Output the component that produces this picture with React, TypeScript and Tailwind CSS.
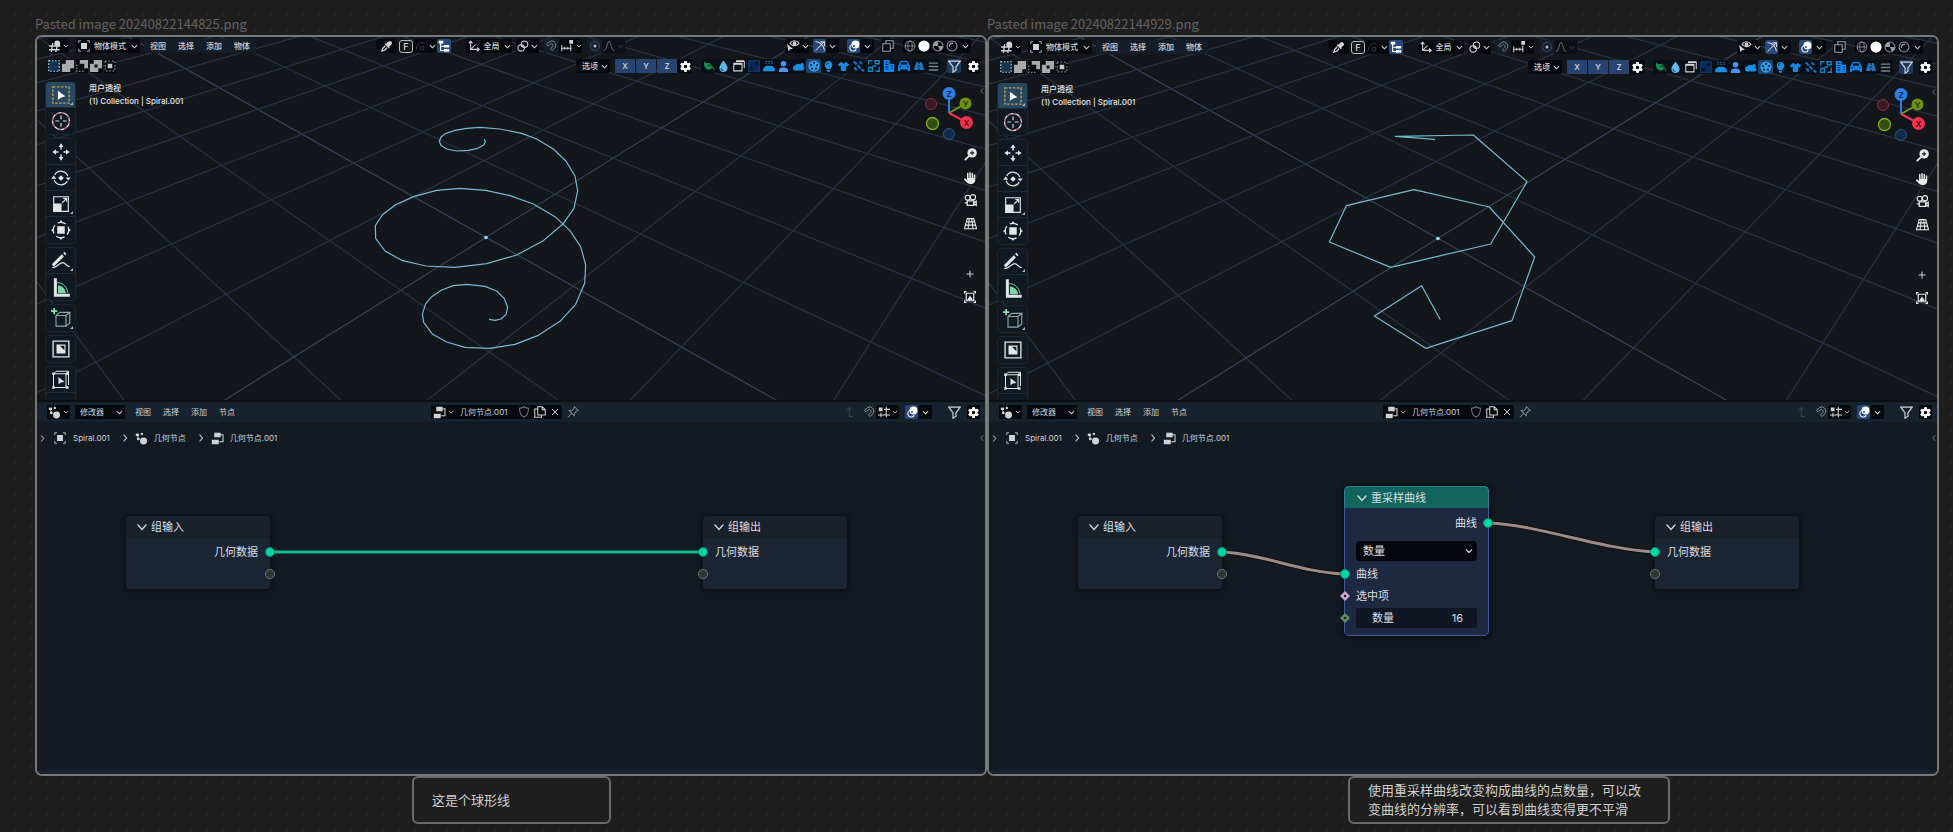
import type { ReactNode } from 'react';
import {
  FaBars, FaBuilding, FaCar, FaDroplet, FaEyeDropper, FaGear, FaHand, FaLeaf, FaLightbulb, FaRoad, FaShirt, FaUser,
} from 'react-icons/fa6';

type IconProps = { children: ReactNode; className?: string };

/* 16-unit stroke icon, sized by its class */
function Icon({ children, className = 'size-3' }: IconProps) {
  return (
    <svg viewBox="0 0 16 16" className={`shrink-0 ${className}`} fill="none" stroke="currentColor" strokeWidth="1.4" aria-hidden="true">
      {children}
    </svg>
  );
}

const Chevron = ({ className = 'size-[7px]' }: { className?: string }) => (
  <Icon className={className}><path d="M2 5l6 6 6-6" strokeWidth="2.4" /></Icon>
);
const ThinChevron = () => (
  <Icon className="size-2.5"><path d="M1 4l7 8 7-8" strokeWidth="1.900" /></Icon>
);
const ChevronRight = ({ className = 'size-2' }: { className?: string }) => (
  <Icon className={className}><path d="M5 1l6 7-6 7" strokeWidth="2.2" /></Icon>
);
const ViewportIcon = () => (
  <Icon><path d="M0 8h15M0 13h14M5 4L3 16M11 8l-2 8" strokeWidth="1.800" /><circle cx="11" cy="4.500" r="3.900" fill="currentColor" stroke="none" /></Icon>
);
const ObjectIcon = ({ className = 'size-3' }: { className?: string }) => (
  <Icon className={className}>
    <path d="M1 4V1h3M12 1h3v3M15 12v3h-3M4 15H1v-3" strokeWidth="1.100" />
    <path d="M4 4h8v8H4z" fill="currentColor" stroke="none" />
  </Icon>
);
const TreeIcon = () => (
  <Icon>
    <path d="M1 1h6v3.500H1zM8 6.500h7V10H8zM8 12h7v3.500H8z" fill="currentColor" stroke="none" />
    <path d="M3.500 4v10H8M3.500 8.300H8" />
  </Icon>
);
const AxesIcon = () => (
  <Icon><path d="M3.500 2v10.500H14M3.500 12.500L10 6M1 4.500L3.500 1.500 6 4.500M12 10l3 2.500-3 2.500" /></Icon>
);
const LinkIcon = () => (
  <Icon><circle cx="10" cy="5.500" r="4.300" /><circle cx="5.500" cy="10.500" r="4.300" /><circle cx="8" cy="8" r="1.400" fill="currentColor" stroke="none" /></Icon>
);
const MagnetIcon = () => (
  <Icon><path d="M2 5.500l3.500-3a5.500 5.500 0 0 1 7.500 8L9.500 14l-2.200-2.200 3.200-3.300a2.300 2.300 0 0 0-3.200-3.200L4.200 8z" strokeWidth="1.300" /></Icon>
);
const RulerSnapIcon = () => (
  <Icon className="h-3 w-3.5"><path d="M0 11h14M1 7v8M5 9v4M9 9v4M13 6v9" /><path d="M11 0h5v5h-5z" fill="currentColor" stroke="none" /></Icon>
);
const FalloffIcon = () => <Icon><path d="M1 14c5 0 4-12 7-12s2 12 7 12" /></Icon>;
const EyePointerIcon = () => (
  <Icon className="h-3 w-3.5"><path d="M4 4.500C7 0 13 0 16 4.500 13 8.500 7.500 8.500 4 4.500z" /><circle cx="10" cy="4.500" r="1.800" fill="currentColor" /><path d="M0 5l2 10 2.500-3H8z" fill="currentColor" stroke="none" /></Icon>
);
const GizmoIcon = () => (
  <Icon><path d="M2 2c7 1 11 6 12 12M2 14L13 3M8.500 2.500H14V8" /></Icon>
);
const OverlayIcon = () => (
  <Icon><circle cx="10" cy="6" r="5.300" fill="currentColor" stroke="none" /><path d="M5 6.200a4.500 4.500 0 1 0 6 6" /><circle cx="8" cy="8" r="1.300" fill="#26487c" stroke="none" /></Icon>
);
const XrayIcon = () => <Icon><path d="M1 5h10v10H1zM5 5V1h10v10h-4M6 5h5v6" /></Icon>;
const GlobeIcon = () => (
  <Icon><circle cx="8" cy="8" r="6.600" strokeWidth="1.200" /><ellipse cx="8" cy="8" rx="3" ry="6.600" strokeWidth="1.100" /><path d="M1.500 8h13" strokeWidth="1.100" /></Icon>
);
const SolidIcon = () => <Icon><circle cx="8" cy="8" r="7.500" fill="currentColor" stroke="none" /></Icon>;
const MaterialIcon = () => (
  <Icon><circle cx="8" cy="8" r="6.600" /><path d="M8 1.500v6.500h6.500a6.500 6.500 0 0 1-4 6L8 8H1.500A6.500 6.500 0 0 1 8 1.500z" fill="currentColor" stroke="none" /></Icon>
);
const RenderedIcon = () => (
  <Icon><circle cx="8" cy="8" r="6.600" /><path d="M4.500 9a4 4 0 0 1 5-4.500" strokeWidth="1.800" /></Icon>
);
const FunnelIcon = () => <Icon className="size-[13px]"><path d="M1 1.500h14L9.800 8.500v4L6.200 15V8.500z" strokeWidth="1.500" /></Icon>;
const NodesIcon = () => (
  <Icon className="size-[13px]">
    <g fill="currentColor" stroke="none"><path d="M1 2h4v3H1z" /><circle cx="8.500" cy="2.500" r="1.500" /><circle cx="4" cy="8.500" r="1.800" /><circle cx="10.500" cy="11" r="4.300" /></g>
    <path d="M3 5l2 4" strokeWidth="1" />
  </Icon>
);
const GroupIcon = () => (
  <Icon className="size-[13px]">
    <path d="M4 1h8v5.500H4zM1 9.500h8.500V15H1z" fill="currentColor" stroke="none" />
    <path d="M12 3.500h2.800V12H10" strokeWidth="1.300" />
  </Icon>
);

/* selection-mode squares of the tool settings row */
const selectModes = [
  <Icon key="set"><path d="M1 1h14v14H1z" fill="#16354f" stroke="#a9cbe6" strokeWidth="1.600" strokeDasharray="2.200 2" /></Icon>,
  <Icon key="add"><path d="M5 0h11v11h-5v5H0V5h5z" fill="#a9aaac" stroke="none" /></Icon>,
  <Icon key="sub"><path d="M5 0h11v11h-5V5H5z" fill="#a9aaac" stroke="none" /><path d="M1 6v9h9" stroke="#a9aaac" strokeDasharray="2 2" /></Icon>,
  <Icon key="inv"><path d="M5 0h11v11h-5v5H0V5h5zM6 6v4h4V6z" fill="#a9aaac" fillRule="evenodd" stroke="none" /></Icon>,
  <Icon key="and"><path d="M5 5h6v6H5z" fill="#c8c9ca" stroke="none" /><path d="M1.500 1.500h13v13h-13z" stroke="#8d8f91" strokeWidth="1.600" strokeDasharray="2 2.500" /></Icon>,
];

const filterIcons: { name: string; color: string; icon: ReactNode }[] = [
  { name: 'leaf', color: 'text-[#188a4a]', icon: <FaLeaf className="-scale-x-100 text-[10px]" /> },
  { name: 'liquid', color: 'text-[#5fb9ec]', icon: <FaDroplet /> },
  { name: 'window', color: 'text-[#d6d6d6]', icon: <Icon><path d="M4 2h11v9" /><path d="M1 5h11v9.500H1z" fill="#0a0f14" /><path d="M4 1.500h11M1 5h11" strokeWidth="2.500" /></Icon> },
  { name: 'texture', color: 'text-[#123f7e]', icon: <Icon><path d="M1 1h14v14H1z" fill="#0a2a5c" /><path d="M2 9h5v5H2zM9 2h5v5H9z" fill="#071326" stroke="none" /></Icon> },
  { name: 'steam', color: 'text-[#1b8fdd]', icon: <Icon><path d="M0 15c0-6 3-7.500 8-7.500s8 1.500 8 7.500z" fill="currentColor" stroke="none" /><path d="M4 1v4M8 1v4M12 1v4" strokeWidth="1.500" strokeDasharray="1.800 .8" /></Icon> },
  { name: 'person', color: 'text-[#4f94f5]', icon: <FaUser /> },
  { name: 'cloud', color: 'text-[#1b8fdd]', icon: <Icon><path d="M3.500 14a3.500 3.500 0 0 1 0-7 4 4 0 0 1 6-1 2.500 2.500 0 1 1 4 2.500C17 11 15 14 12.500 14z" fill="currentColor" stroke="none" /></Icon> },
  { name: 'reel', color: 'bg-[#1b446b] text-[#2f9ae8]', icon: <Icon><circle cx="8" cy="8" r="7.500" fill="currentColor" stroke="none" /><g fill="#12304d" stroke="none"><circle cx="8" cy="3.800" r="1.500" /><circle cx="12" cy="6.800" r="1.500" /><circle cx="10.500" cy="11.500" r="1.500" /><circle cx="5.500" cy="11.500" r="1.500" /><circle cx="4" cy="6.800" r="1.500" /></g></Icon> },
  { name: 'bulb', color: 'text-[#1b8fdd]', icon: <FaLightbulb /> },
  { name: 'cloth', color: 'text-[#1489de]', icon: <FaShirt /> },
  { name: 'particles', color: 'text-[#1673c4]', icon: <Icon><path d="M1 2l4 4M6 7l4 4M11 12l4 3M9 2l3 3M2 10l3 4" strokeWidth="2.800" /></Icon> },
  { name: 'arrange', color: 'text-[#1787c9]', icon: <Icon><path d="M1 6V1h5M9 1h6v4h-5zM15 9v6h-5M1 10h5v5H1zM6 8h5" strokeWidth="1.700" /></Icon> },
  { name: 'building', color: 'text-[#0f84ee]', icon: <Icon><path d="M1 0h8v5h6v11H1z" fill="currentColor" stroke="none" /><path d="M3 3h4M3 6h4M3 9h4M3 12h4M11 8h2M11 11h2" stroke="#0a1a2c" strokeWidth="1.200" /></Icon> },
  { name: 'car', color: 'text-[#1080e0]', icon: <FaCar className="text-[12px]" /> },
  { name: 'road', color: 'text-[#1b76bd]', icon: <FaRoad className="text-[10px]" /> },
  { name: 'list', color: 'text-[#7c8086]', icon: <FaBars /> },
];

type BtnProps = { label: string; children?: ReactNode; className?: string };

function Btn({ label, children, className = '' }: BtnProps) {
  return (
    <button type="button" aria-label={label} className={`flex h-3.5 shrink-0 items-center justify-center gap-0.5 rounded-[2px] ${className}`}>
      {children}
    </button>
  );
}

const DARK = 'bg-[#06090d]';

function Dropdown({ label, value, className, pad, icon }: { label: string; value: string; className: string; pad: string; icon?: ReactNode }) {
  return (
    <label className={`relative flex h-3.5 shrink-0 items-center rounded-[2px] bg-[#06090d] ${className}`}>
      {icon && <span className="absolute left-0.5">{icon}</span>}
      <select aria-label={label} className={`h-full w-full appearance-none bg-transparent text-[8px] leading-[14px] outline-none ${pad}`}>
        <option>{value}</option>
      </select>
      <span className="pointer-events-none absolute right-0.5"><Chevron /></span>
    </label>
  );
}

function Menus({ items, className = '' }: { items: string[]; className?: string }) {
  return (
    <nav className="flex">
      {items.map((m) => (
        <button type="button" key={m} className={`h-3.5 w-7 rounded-[2px] text-[8px] leading-[14px] ${className}`}>{m}</button>
      ))}
    </nav>
  );
}

/* Perspective floor grid: projects lattice point (i, j) to viewport pixels */
function project(i: number, j: number) {
  const w = 1 - 0.096 * i + 0.102 * j;
  return [(486 + 32.3 * i + 126 * j) / w - 37, (237.3 + 21.5 * i - 23.4 * j) / w - 37];
}

function FloorGrid() {
  const lines: { key: string; a: number[]; b: number[]; axis: boolean }[] = [];
  for (let c = -8; c <= 12; c++) {
    lines.push({ key: `j${c}`, a: project(-14, c), b: project((0.9 + 0.102 * c) / 0.096, c), axis: c === 0 });
  }
  for (let c = -12; c <= 8; c++) {
    lines.push({ key: `i${c}`, a: project(c, (0.096 * c - 0.9) / 0.102), b: project(c, 18), axis: c === 0 });
  }
  return (
    <>
      {lines.map((l) => (
        <line key={l.key} x1={l.a[0]} y1={l.a[1]} x2={l.b[0]} y2={l.b[1]} stroke={l.axis ? '#394254' : '#2a3243'} strokeWidth="1.2" />
      ))}
    </>
  );
}

const SPIRAL =
  '433,118 436,126 430,136 410,146 385,151 350,153 320,147 303,136 298,124 303,111 318,100 345,91 380,85 420,82 480,87 545,100 590,117 640,147 678,183 705,228 713,272 702,325 668,373 610,422 530,465 440,491 345,502 258,498 185,481 135,453 107,415 106,377 127,345 165,315 220,290 290,271 360,265 437,271 510,287 580,312 645,350 690,392 722,440 737,495 734,550 707,613 660,664 595,706 525,733 450,745 375,742 320,726 278,703 251,667 247,643 256,613 275,590 305,570 340,557 380,553 435,559 470,573 493,596 503,622 498,643 483,657 465,661 447,658';
const RESAMPLED =
  '429,115 310,106 544,102 705,242 596,429 296,499 112,423 163,314 366,266 592,318 728,468 660,659 401,742 247,645 389,554 445,656';

const toolGroups: { name: string; icon: ReactNode; more?: boolean }[][] = [
  [
    { name: '框选', more: true, icon: <Icon className="size-5"><path d="M1.500 1.500h13v13h-13z" stroke="#c3a052" strokeWidth="1.100" strokeDasharray="2 1.200" /><path d="M5.500 4.500v7.500l2.200-1.800L11.500 9z" fill="#fff" stroke="none" /></Icon> },
    { name: '游标', icon: <Icon className="size-5"><circle cx="8" cy="8" r="6.800" stroke="#e3e3e3" strokeWidth="1" /><circle cx="8" cy="8" r="6.800" stroke="#a8485c" strokeWidth="1" strokeDasharray="2.700 2.640" /><path d="M8 3.500v3M8 9.500v3M3.500 8h3M9.500 8h3" strokeWidth=".9" /></Icon> },
  ],
  [
    { name: '移动', icon: <Icon className="size-5"><path d="M8 1l2 3H6zM8 15l2-3H6zM1 8l3-2v4zM15 8l-3-2v4z" fill="currentColor" stroke="none" /><path d="M8 4v2M8 10v2M4 8h2M10 8h2" strokeWidth="1.200" /></Icon> },
    { name: '旋转', icon: <Icon className="size-5"><path d="M3 5.500A5.800 5.800 0 0 1 13.500 6.500M13 10.500A5.800 5.800 0 0 1 2.500 9.500" strokeWidth="1" /><path d="M8 5.800L10.200 8 8 10.200 5.800 8zM11.800 7.500h4l-2 2.500zM.2 8.500h4L2.200 6z" fill="currentColor" stroke="none" /></Icon> },
    { name: '缩放', more: true, icon: <Icon className="size-[18px]"><path d="M1.500 1.500h13v13h-13z" strokeWidth="1" /><path d="M1 7.500h7.500V15H1z" fill="currentColor" stroke="none" /><path d="M9 7l4-4M10 3h3v3" strokeWidth="1.100" /></Icon> },
    { name: '变换', icon: <Icon className="size-5"><circle cx="8" cy="8" r="6.200" strokeWidth="1" strokeDasharray="7 2.740" strokeDashoffset="3" /><path d="M5 5h6v6H5zM8 0l1.500 2.200h-3zM8 16l1.500-2.200h-3zM0 8l2.200-1.500v3zM16 8l-2.200-1.500v3z" fill="currentColor" stroke="none" /></Icon> },
  ],
  [
    { name: '标注', more: true, icon: <Icon className="size-5"><path d="M1.500 11.500L9.500 3.500M10.500 2.500l1-1" strokeWidth="2.400" /><path d="M1 13c3 1 4.500-2.500 7.500-3.500s3.500 3 6.500 3" strokeWidth="1" /></Icon> },
    { name: '测量', icon: <Icon className="size-5"><path d="M3.500 1v13.500H15" strokeWidth="2.400" /><path d="M5.500 13V6.500A7 7 0 0 1 12 13z" fill="#7fd6a8" stroke="none" /><path d="M5 4.500c5 0 8 4 8.500 8" stroke="#7fd6a8" strokeWidth=".8" /></Icon> },
  ],
  [{ name: '添加立方体', more: true, icon: <Icon className="size-5"><path d="M4 6h8v8.500H4zM4 6l3-2.500h8L12 6M15 3.500V12l-3 2.500" stroke="#8fa8a0" strokeWidth=".9" /><path d="M2.500 0v5M0 2.500h5" stroke="#8fe0b4" strokeWidth="1.400" /></Icon> }],
  [{ name: '遮罩', icon: <Icon className="size-[18px]"><path d="M1 1h14v14H1z" strokeWidth="1.200" /><path d="M4 4h8v8H4z" fill="currentColor" stroke="none" /><path d="M7 5h4v4z" fill="#10171f" stroke="none" /></Icon> }],
  [
    { name: '晶格', icon: <Icon className="size-5"><path d="M2 3h10v11H2zM2 3l2-2h10l-2 2M14 1v11" strokeWidth=".8" /><path d="M6 5.500v6l1.800-1.500 3-.5zM1 2h2v2H1zM1 13h2v2H1zM12 13h2v2h-2zM12 2h2v2h-2z" fill="currentColor" stroke="none" /></Icon> },
    { name: '更多', icon: <Icon className="size-5"><path d="M4 5v6l2-2 4-.5z" fill="currentColor" stroke="none" /></Icon> },
  ],
];

function Toolbar() {
  return (
    <div className="ml-[9px] flex w-[29px] shrink-0 flex-col gap-[5px]">
      {toolGroups.map((group, g) => (
        <div key={g} className="flex shrink-0 flex-col divide-y divide-[#1c2a37] overflow-hidden rounded-[3px] bg-[#101922] outline outline-[#1a2632]">
          {group.map((t, k) => (
            <button key={t.name} type="button" aria-label={t.name} className={`relative flex h-[26px] items-center justify-center text-[#e2e4e6] ${g === 0 && k === 0 ? 'bg-[#27485f]' : ''}`}>
              {t.icon}
              {t.more && <svg viewBox="0 0 4 4" className="absolute right-0.5 bottom-0.5 size-[3px]" aria-hidden="true"><path d="M4 0v4H0z" fill="#b5b9bd" /></svg>}
            </button>
          ))}
        </div>
      ))}
    </div>
  );
}

function AxisGizmo() {
  return (
    <svg viewBox="0 0 60 61" className="mr-1.5 h-[61px] w-[60px] shrink-0" fontFamily="Inter" fontSize="8" fontWeight="600" textAnchor="middle" aria-label="坐标轴">
      <circle cx="12" cy="22" r="5.500" fill="#3b1a26" stroke="#8c2f47" />
      <circle cx="30" cy="52" r="5.500" fill="#152a45" stroke="#2a568c" />
      <path d="M30 31V17" stroke="#2f7fe0" strokeWidth="2" />
      <path d="M30 31l14-8" stroke="#6f9a14" strokeWidth="2" />
      <path d="M30 31l15 8" stroke="#ee3350" strokeWidth="2" />
      <circle cx="13.500" cy="41.500" r="6" fill="#344c16" stroke="#7fae1a" strokeWidth="1.300" />
      <circle cx="46.500" cy="21.500" r="6" fill="#6d9210" />
      <circle cx="30" cy="11.500" r="6.500" fill="#2c80e6" />
      <circle cx="47.500" cy="40.500" r="6.500" fill="#f3304f" />
      <text x="30" y="14.500" fill="#0c1f3a">Z</text>
      <text x="46.500" y="24.500" fill="#1c2a06">Y</text>
      <text x="47.500" y="43.500" fill="#3f0a14">X</text>
    </svg>
  );
}

const NAV = 'flex h-[23px] w-[22px] items-center justify-center text-[#e6e6e6]';

function Navigation() {
  return (
    <div className="ml-auto flex flex-col items-end">
      <AxisGizmo />
      <div className="mr-1 flex flex-col">
        <button type="button" aria-label="缩放视图" className={NAV}>
          <Icon className="size-[13px]"><circle cx="10" cy="6" r="5.800" fill="currentColor" stroke="none" /><path d="M6 10l-5 5" strokeWidth="2.200" /><path d="M10 3.500v5M7.500 6h5" stroke="#10161c" strokeWidth="1.300" /></Icon>
        </button>
        <button type="button" aria-label="平移视图" className={`${NAV} text-[12px]`}><FaHand /></button>
        <button type="button" aria-label="相机视图" className={NAV}>
          <Icon className="size-[13px]"><circle cx="4.500" cy="4.500" r="3" /><circle cx="11" cy="4" r="3.200" /><path d="M4 8.500h8V14H4zM12 11l3-2v5l-3-2M4 11H1" strokeWidth="1.600" /></Icon>
        </button>
        <button type="button" aria-label="透视切换" className={NAV}>
          <Icon className="size-[13px]"><path d="M4 2h8l3.500 12.500H.5zM2.800 6h10.400M1.600 10h12.800M6.500 2L5 14.500M9.500 2L11 14.500" strokeWidth="1.300" /></Icon>
        </button>
      </div>
      <div className="mt-[27px] mr-1 flex flex-col">
        <button type="button" aria-label="新增" className={NAV}><Icon className="size-2"><path d="M8 1v14M1 8h14" strokeWidth="1.800" /></Icon></button>
        <button type="button" aria-label="参考图" className={NAV}>
          <Icon className="size-3"><path d="M3 3h10v10H3z" strokeWidth="1.600" /><path d="M4 12l4-6 4 6zM0 0h4L0 4zM16 0v4l-4-4zM0 16v-4l4 4zM16 16h-4l4-4z" fill="currentColor" stroke="none" /></Icon>
        </button>
      </div>
    </div>
  );
}

function Viewport({ points, shifted }: { points: string; shifted?: boolean }) {
  return (
    <section className={`relative flex h-[363px] flex-col overflow-hidden bg-[#13171c] font-medium ${shifted ? 'pt-[3px]' : 'pt-0.5'}`}>
      <svg className="absolute inset-0 h-full w-full" aria-hidden="true">
        <g transform={shifted ? 'translate(0 1)' : undefined}>
          <FloorGrid />
          <g transform="translate(303 63) scale(.33333)">
            <polyline points={points} fill="none" stroke="#76b9cf" strokeWidth="3.600" strokeLinejoin="round" />
          </g>
          <circle cx="449" cy="200.500" r="1.800" fill="#9fdcf2" />
        </g>
      </svg>

      <div className="relative flex shrink-0 items-center pr-3.5 pl-3">
        <Btn label="编辑器类型" className={`w-5 ${DARK}`}><ViewportIcon /><Chevron className="size-1.5" /></Btn>
        <Dropdown label="模式" value="物体模式" className="ml-[7px] w-16" pad="pl-[18px]" icon={<ObjectIcon />} />
        <div className="ml-1"><Menus items={['视图', '选择', '添加', '物体']} className="bg-[#151d28]" /></div>

        <div className="ml-[120px] flex items-center">
          <Btn label="吸管" className={`w-[21px] text-[11px] ${DARK}`}><FaEyeDropper /></Btn>
          <button type="button" className="ml-0.5 h-[13px] w-3.5 rounded-[3px] border border-[#b9babc] text-[9px] leading-[11px] text-[#d9d9d9]">F</button>
          <Btn label="吸附面" className={`w-3.5 text-[#3a3e43] ${DARK}`}><Icon className="size-2.5"><path d="M14 2C6 2 2 7 2 14M9 9h5v5H9z" /></Icon></Btn>
          <Btn label="展开" className={`w-2.5 ${DARK}`}><Chevron /></Btn>
          <Btn label="层级" className="w-3.5 bg-[#26487c] text-white"><TreeIcon /></Btn>
          <Btn label="变换坐标系" className={`ml-[15px] w-[46px] ${DARK}`}>
            <AxesIcon /><span className="mx-0.5 text-[8px] leading-[14px]">全局</span><Chevron />
          </Btn>
          <Btn label="轴心点" className={`ml-1 w-[23px] ${DARK}`}><LinkIcon /><Chevron /></Btn>
          <Btn label="吸附" className="ml-1 w-[15px] bg-[#151d28] text-[#7f8389]"><MagnetIcon /></Btn>
          <Btn label="吸附目标" className={`ml-px w-[23px] ${DARK}`}><RulerSnapIcon /><Chevron className="size-1.5" /></Btn>
          <Btn label="衰减编辑" className="ml-[5px] w-[15px] bg-[#151d2c] text-[#3b4558]"><Icon><circle cx="8" cy="8" r="6" /><circle cx="8" cy="8" r="2" fill="#b9bec6" stroke="none" /></Icon></Btn>
          <Btn label="衰减类型" className="w-[23px] bg-[#0d1116] text-[#5a5f66]"><FalloffIcon /><span className="opacity-40"><Chevron /></span></Btn>
        </div>

        <div className="ml-auto flex items-center">
          <Btn label="可见性" className={`w-6 ${DARK}`}><EyePointerIcon /><Chevron /></Btn>
          <Btn label="控件" className="ml-1 w-[13px] bg-[#26487c]"><GizmoIcon /></Btn>
          <Btn label="控件选项" className={`w-[13px] ${DARK}`}><Chevron /></Btn>
          <Btn label="叠加层" className="ml-2 w-[13px] bg-[#26487c] text-white"><OverlayIcon /></Btn>
          <Btn label="叠加层选项" className={`w-3.5 ${DARK}`}><Chevron /></Btn>
          <Btn label="透视模式" className={`ml-[7px] w-[13px] text-[#9da0a4] ${DARK}`}><XrayIcon /></Btn>
          <div className="ml-[9px] flex rounded-[2px] bg-[#06090d] text-[#9a9da2]">
            <Btn label="线框" className="w-3.5"><GlobeIcon /></Btn>
            <Btn label="实体" className="w-3.5 text-white"><SolidIcon /></Btn>
            <Btn label="材质预览" className="w-3.5"><MaterialIcon /></Btn>
            <Btn label="渲染" className="w-3.5"><RenderedIcon /></Btn>
            <Btn label="着色选项" className="w-3 text-[#d0d0d0]"><Chevron /></Btn>
          </div>
        </div>
      </div>

      <div className="relative mt-[6px] flex shrink-0 items-center pr-[5px] pl-[11px]">
        <div className="flex gap-0.5">
          {selectModes.map((m, k) => <Btn key={k} label={`选择模式 ${k + 1}`} className={`w-3 ${DARK}`}>{m}</Btn>)}
        </div>
        <div className="ml-auto flex items-center">
          <Dropdown label="选项" value="选项" className="w-[34px]" pad="pl-1.5" />
          <div className="ml-[5px] flex gap-px">
            {['X', 'Y', 'Z'].map((a) => (
              <button type="button" key={a} className="h-3.5 w-5 bg-[#274470] text-[8px] leading-[14px] text-[#d5dbe4]">{a}</button>
            ))}
          </div>
          <Btn label="镜像设置" className={`w-4 text-[11px] text-white ${DARK}`}><FaGear /></Btn>
          <div className="ml-2 flex">
            {filterIcons.map((f) => (
              <Btn key={f.name} label={f.name} className={`w-[15px] text-[11px] ${f.name === 'reel' ? '' : 'bg-[#0a1017]'} ${f.color}`}>{f.icon}</Btn>
            ))}
          </div>
          <Btn label="过滤" className="ml-1.5 w-3.5 bg-[#1f3a60]"><FunnelIcon /></Btn>
          <Btn label="设置" className={`ml-1.5 w-[13px] text-[11px] text-white ${DARK}`}><FaGear /></Btn>
        </div>
      </div>

      <div className="relative mt-[9px] flex min-h-0 flex-1 overflow-hidden">
        <Toolbar />
        <div className="ml-3.5 text-[8px] leading-[13px] text-[#e4e6e8]">
          <p>用户透视</p>
          <p>(1) Collection | Spiral.001</p>
        </div>
        <Navigation />
        <span className="absolute top-1.5 right-0 rotate-180 text-[#8b8f94]"><ChevronRight className="size-1.5" /></span>
      </div>
    </section>
  );
}

function Socket({ side, kind = 'geometry' }: { side: 'left' | 'right'; kind?: 'geometry' | 'empty' | 'bool' | 'int' }) {
  const place = side === 'left' ? '-left-[5px]' : '-right-[5px]';
  if (kind === 'bool' || kind === 'int') {
    return (
      <svg viewBox="0 0 10 10" className={`absolute top-1.5 size-2.5 ${place}`} aria-hidden="true">
        <path d="M5 0l5 5-5 5-5-5z" fill={kind === 'bool' ? '#cca6d6' : '#598c5c'} />
        <circle cx="5" cy="5" r="1.200" fill="#151a28" />
      </svg>
    );
  }
  return (
    <span className={`absolute top-1.5 size-2.5 rounded-full border ${place} ${kind === 'geometry' ? 'border-[#0a8a6c] bg-[#00d6a3]' : 'border-[#77797b] bg-[#2f3434]'}`} />
  );
}

const NODE = 'absolute flex flex-col text-[11px] leading-[22px] text-[#dcdfe3]';

function GroupNode({ title, side, className }: { title: string; side: 'left' | 'right'; className: string }) {
  return (
    <article className={`${NODE} w-36 rounded-[4px] bg-[#1b2533] pb-1 shadow-[0_1px_5px_2px_rgba(0,0,0,0.4)] ${className}`}>
      <h3 className="flex h-[22px] items-center gap-1 rounded-t-[4px] border-b border-[#161d27] bg-[#1b212b] pl-[11px]">
        <ThinChevron />{title}
      </h3>
      <p className={`relative mt-[3px] h-[22px] px-3 ${side === 'right' ? 'text-right' : ''}`}>几何数据<Socket side={side} /></p>
      <p className="relative h-[22px]"><Socket side={side} kind="empty" /></p>
    </article>
  );
}

function ResampleNode() {
  return (
    <article className={`${NODE} top-16 left-[355px] w-[145px] rounded-[5px] border border-[#41599f] bg-[#1d2940] pb-1.5 shadow-[0_1px_5px_2px_rgba(0,0,0,0.4)]`}>
      <h3 className="-mx-px -mt-px flex h-[22px] items-center gap-1 rounded-t-[5px] border-x border-t border-[#2f7f96] bg-[#10655c] pl-3">
        <ThinChevron />重采样曲线
      </h3>
      <p className="relative mt-1 h-[22px] px-[11px] text-right">曲线<Socket side="right" /></p>
      <label className="relative mx-[11px] mt-[7px] mb-0.5 flex h-5 items-center rounded-[4px] bg-[#04070b]">
        <select aria-label="模式" className="h-full w-full appearance-none bg-transparent pl-[7px] text-[11px] leading-5 outline-none">
          <option>数量</option>
        </select>
        <span className="pointer-events-none absolute right-1"><Chevron className="size-2" /></span>
      </label>
      <p className="relative h-[22px] px-[11px]">曲线<Socket side="left" /></p>
      <p className="relative h-[22px] px-[11px]">选中项<Socket side="left" kind="bool" /></p>
      <div className="relative flex h-[22px] items-center px-[11px]">
        <Socket side="left" kind="int" />
        <label className="flex h-5 w-full items-center justify-between rounded-[2px] bg-[#101623] pr-3.5 pl-4">
          数量
          <input type="text" inputMode="numeric" defaultValue="16" className="w-8 bg-transparent text-right leading-5 outline-none" />
        </label>
      </div>
    </article>
  );
}

function Wire({ d, color }: { d: string; color: string }) {
  return (
    <g fill="none">
      <path d={d} stroke="#0a1016" strokeWidth="5" />
      <path d={d} stroke={color} strokeWidth="3" />
    </g>
  );
}

function NodeEditor({ resampled }: { resampled?: boolean }) {
  return (
    <section className="border-t-2 border-[#0b1015]">
      <header className="flex h-5 items-center bg-[#16222d] pr-[5px] pl-2.5">
        <Btn label="编辑器类型" className={`w-[23px] ${DARK}`}><NodesIcon /><Chevron className="size-1.5" /></Btn>
        <Dropdown label="树类型" value="修改器" className="ml-[5px] w-[50px]" pad="pl-[5px]" />
        <div className="ml-1"><Menus items={['视图', '选择', '添加', '节点']} /></div>
        <div className="ml-[190px] flex items-center">
          <div className="flex rounded-[2px] bg-[#06090d]">
            <Btn label="浏览节点组" className="w-[25px]"><GroupIcon /><Chevron className="size-1.5" /></Btn>
            <input aria-label="节点组名称" defaultValue="几何节点.001" className="h-3.5 w-[60px] bg-transparent pl-1 text-[8px] leading-[14px] outline-none" />
            <Btn label="伪用户" className="w-4 text-[#777b80]"><Icon><path d="M8 1c2 1.500 4 2 6 2 0 6-1 9.500-6 12C3 12.500 2 9 2 3c2 0 4-.5 6-2z" /></Icon></Btn>
            <Btn label="复制" className="w-4"><Icon><path d="M5 1h6l4 4v7H5zM11 1v4h4M5 4H1v11h9v-3" /></Icon></Btn>
            <Btn label="解除关联" className="w-3.5"><Icon className="size-2"><path d="M2 2l12 12M14 2L2 14" strokeWidth="2" /></Icon></Btn>
          </div>
          <Btn label="固定" className="ml-1 w-3.5 text-[#7d8893]"><Icon><path d="M10 1l5 5-2 .5-3 3-.5 3.500L3 6.500l3.500-.5 3-3zM6 10l-5 5" /></Icon></Btn>
        </div>
        <div className="ml-auto flex items-center">
          <Btn label="上一级" className="w-3.5 text-[#39444f]"><Icon><path d="M12 14H7V3M4 6l3-4 3 4" /></Icon></Btn>
          <Btn label="吸附" className="ml-[5px] w-3.5 text-[#8b9299]"><MagnetIcon /></Btn>
          <Btn label="吸附目标" className={`w-[23px] ${DARK}`}><Icon><path d="M1 2h5v5H1z" fill="currentColor" stroke="none" /><path d="M11 1v14M4 9v6M0 12h16M8 4.500h8" /></Icon><Chevron className="size-1.5" /></Btn>
          <Btn label="叠加层" className="ml-1.5 w-[13px] bg-[#26487c] text-white"><OverlayIcon /></Btn>
          <Btn label="叠加层选项" className={`w-3.5 ${DARK}`}><Chevron /></Btn>
          <Btn label="过滤" className="ml-[15px] w-3.5"><FunnelIcon /></Btn>
          <Btn label="设置" className={`ml-1.5 w-[13px] text-[11px] text-white ${DARK}`}><FaGear /></Btn>
        </div>
      </header>

      <div className="relative h-[352px] border-b-4 border-[#1b2030] bg-[#131a22]">
        <nav className="flex items-center pt-[6px] pl-0.5 text-[8px] leading-5 text-[#cfd3d7]">
          <ChevronRight className="size-[7px]" />
          <span className="ml-2 flex items-center gap-[7px]"><ObjectIcon /><a href="#object">Spiral.001</a></span>
          <span className="ml-[11px] flex items-center gap-1.5"><ChevronRight /><NodesIcon /><a href="#modifier">几何节点</a></span>
          <span className="ml-[11px] flex items-center gap-1.5"><ChevronRight /><GroupIcon /><a href="#group">几何节点.001</a></span>
          <span className="ml-auto rotate-180 text-[#8b8f94]"><ChevronRight className="size-1.5" /></span>
        </nav>
        <svg className="pointer-events-none absolute inset-0 h-full w-full" aria-hidden="true">
          {resampled ? (
            <>
              <Wire d="M233 130C275 132 310 150 355 152" color="#a08a84" />
              <Wire d="M500 101C550 103 610 127 666 130" color="#a08a84" />
            </>
          ) : (
            <Wire d="M233 130H667" color="#14c18e" />
          )}
        </svg>
        <GroupNode title="组输入" side="right" className="top-[94px] left-[89px]" />
        {resampled && <ResampleNode />}
        <GroupNode title="组输出" side="left" className="top-[94px] left-[666px]" />
      </div>
    </section>
  );
}

function CanvasCard({ title, resampled }: { title: string; resampled?: boolean }) {
  return (
    <figure className="min-w-0">
      <figcaption className="truncate pt-3.5 pb-px font-['Noto_Sans_CJK_SC',sans-serif] text-[13px] leading-5 text-[#636363]">{title}</figcaption>
      <div className="overflow-hidden rounded-[7px] border-2 border-[#777878]">
        <Viewport points={resampled ? RESAMPLED : SPIRAL} shifted={resampled} />
        <NodeEditor resampled={resampled} />
      </div>
    </figure>
  );
}

function Note({ children, className }: { children: ReactNode; className: string }) {
  return (
    <p className={`flex h-12 items-center rounded-[6px] border-2 border-[#6b6b6b] bg-[#1e1e1e] pl-[18px] text-[13px] leading-[19px] text-[#d0d0d0] ${className}`}>
      {children}
    </p>
  );
}

export default function App() {
  return (
    <main className="grid min-h-screen grid-cols-2 content-start overflow-hidden bg-[#1e1e1e] bg-[radial-gradient(circle_at_1px_1px,#292929_1px,transparent_1px)] bg-[size:16px_16px] bg-[position:14px_13px] pr-3.5 pl-[35px] font-[Inter,'Noto_Sans_CJK_SC',sans-serif] text-[#d0d3d6]">
      <CanvasCard title="Pasted image 20240822144825.png" />
      <CanvasCard title="Pasted image 20240822144929.png" resampled />
      <Note className="ml-[377px] w-[199px]">这是个球形线</Note>
      <Note className="ml-[361px] w-[322px]">
        <span>使用重采样曲线改变构成曲线的点数量，可以改<br />变曲线的分辨率，可以看到曲线变得更不平滑</span>
      </Note>
    </main>
  );
}
